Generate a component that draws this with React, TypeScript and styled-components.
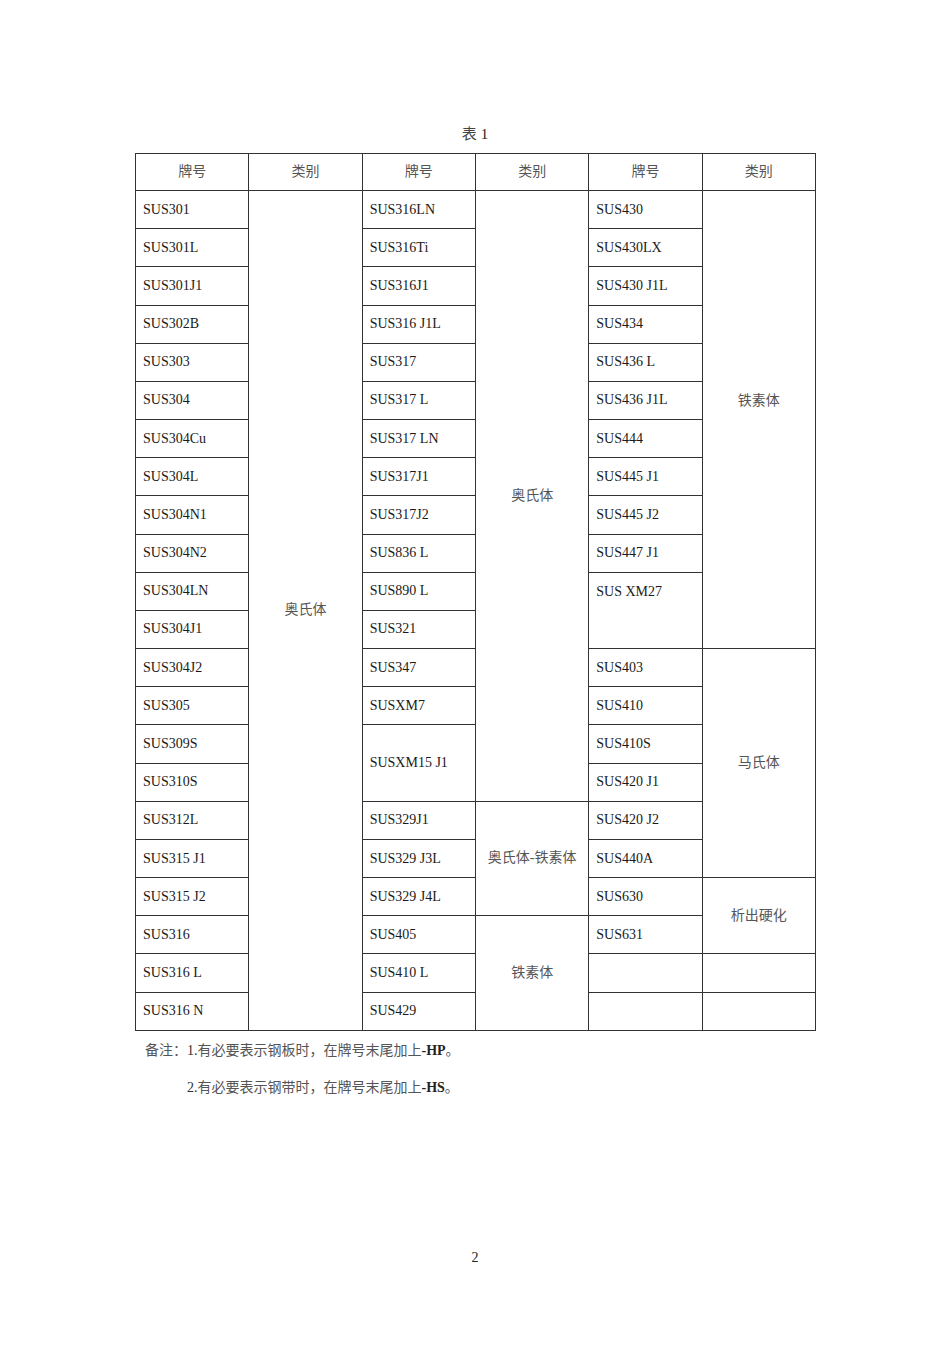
import React from "react";
import styled, { createGlobalStyle } from "styled-components";

const Global = createGlobalStyle`
  html, body { margin: 0; padding: 0; background: #fff; }
  body { font-family: "Liberation Serif", "Noto Sans CJK SC", serif; color: #1a1a1a; }
`;

const Page = styled.div`
  width: 950px;
  height: 1345px;
  box-sizing: border-box;
  padding: 124px 135px 0 135px;
  display: flex;
  flex-direction: column;
`;

const Title = styled.div`
  height: 20px;
  line-height: 20px;
  text-align: center;
  font-size: 15px;
  margin-bottom: 9px;
  font-family: "Liberation Serif", "Noto Sans CJK SC", serif;
  color: #222;
`;

const TitleCjk = styled.span`
  font-family: "Noto Sans CJK SC", serif;
  color: #444;
  line-height: 16px;
`;

const Table = styled.table`
  width: 680px;
  border-collapse: collapse;
  table-layout: fixed;
  border: 1px solid #333;
`;

const HeadRow = styled.tr`
  height: 37px;
`;

const Row = styled.tr`
  height: 38.18px;
`;

const Th = styled.th`
  border: 1px solid #333;
  font-weight: normal;
  font-size: 14px;
  font-family: "Noto Sans CJK SC", serif;
  color: #555;
  text-align: center;
  vertical-align: middle;
  padding: 0 0 4px;
  line-height: 16px;
  width: 113.33px;
`;

const Td = styled.td<{ $cat?: boolean; $top?: boolean; $lift?: boolean }>`
  border: 1px solid #333;
  padding: ${(p) => (p.$top ? "0 7px" : p.$lift ? "0 7px 42px" : p.$cat ? "0 7px 4px" : "0 7px")};
  font-size: 14px;
  font-family: ${(p) => (p.$cat ? `"Noto Sans CJK SC", serif` : `"Liberation Serif", serif`)};
  color: ${(p) => (p.$cat ? "#555" : "#1a1a1a")};
  text-align: ${(p) => (p.$cat ? "center" : "left")};
  vertical-align: ${(p) => (p.$top ? "top" : "middle")};
  line-height: ${(p) => (p.$top ? "37px" : p.$cat ? "16px" : "18px")};
  white-space: nowrap;
`;

const Hyphen = styled.span`
  font-family: "Liberation Serif", serif;
`;

const Notes = styled.div`
  margin-top: 10px;
  padding-left: 10px;
  font-size: 14px;
  font-family: "Liberation Serif", "Noto Sans CJK SC", serif;
  color: #333;
  display: flex;
  flex-direction: column;
  gap: 17px;
`;

const NoteLine = styled.div<{ $indent?: boolean }>`
  height: 20px;
  line-height: 20px;
  padding-left: ${(p) => (p.$indent ? "42px" : "0")};
  white-space: nowrap;
  overflow: visible;
`;

const Cjk = styled.span`
  font-family: "Noto Sans CJK SC", serif;
  color: #555;
  line-height: 16px;
`;

const Code = styled.span`
  font-weight: bold;
  color: #222;
`;

const PageNum = styled.div`
  margin-top: auto;
  margin-bottom: 77px;
  text-align: center;
  font-size: 14px;
  line-height: 20px;
  color: #222;
`;

type Cell = { t: string; rs?: number; cat?: boolean; top?: boolean; lift?: boolean } | null;

const N = 22;

const col1: Cell[] = [
  "SUS301", "SUS301L", "SUS301J1", "SUS302B", "SUS303", "SUS304", "SUS304Cu", "SUS304L",
  "SUS304N1", "SUS304N2", "SUS304LN", "SUS304J1", "SUS304J2", "SUS305", "SUS309S", "SUS310S",
  "SUS312L", "SUS315 J1", "SUS315 J2", "SUS316", "SUS316 L", "SUS316 N",
].map((t) => ({ t }));

const col2: Cell[] = Array.from({ length: N }, (_, i) =>
  i === 0 ? { t: "奥氏体", rs: 22, cat: true } : null
);

const col3: Cell[] = [
  { t: "SUS316LN" }, { t: "SUS316Ti" }, { t: "SUS316J1" }, { t: "SUS316 J1L" }, { t: "SUS317" },
  { t: "SUS317 L" }, { t: "SUS317 LN" }, { t: "SUS317J1" }, { t: "SUS317J2" }, { t: "SUS836 L" },
  { t: "SUS890 L" }, { t: "SUS321" }, { t: "SUS347" }, { t: "SUSXM7" }, { t: "SUSXM15 J1", rs: 2 },
  null, { t: "SUS329J1" }, { t: "SUS329 J3L" }, { t: "SUS329 J4L" }, { t: "SUS405" },
  { t: "SUS410 L" }, { t: "SUS429" },
];

const col4: Cell[] = Array.from({ length: N }, (_, i) => {
  if (i === 0) return { t: "奥氏体", rs: 16, cat: true };
  if (i === 16) return { t: "奥氏体-铁素体", rs: 3, cat: true };
  if (i === 19) return { t: "铁素体", rs: 3, cat: true };
  return null;
});

const col5: Cell[] = [
  { t: "SUS430" }, { t: "SUS430LX" }, { t: "SUS430 J1L" }, { t: "SUS434" }, { t: "SUS436 L" },
  { t: "SUS436 J1L" }, { t: "SUS444" }, { t: "SUS445 J1" }, { t: "SUS445 J2" }, { t: "SUS447 J1" },
  { t: "SUS XM27", rs: 2, top: true }, null, { t: "SUS403" }, { t: "SUS410" }, { t: "SUS410S" },
  { t: "SUS420 J1" }, { t: "SUS420 J2" }, { t: "SUS440A" }, { t: "SUS630" }, { t: "SUS631" },
  { t: "" }, { t: "" },
];

const col6: Cell[] = Array.from({ length: N }, (_, i) => {
  if (i === 0) return { t: "铁素体", rs: 12, cat: true, lift: true };
  if (i === 12) return { t: "马氏体", rs: 6, cat: true };
  if (i === 18) return { t: "析出硬化", rs: 2, cat: true };
  if (i === 20 || i === 21) return { t: "", cat: true };
  return null;
});

const columns = [col1, col2, col3, col4, col5, col6];

const renderText = (t: string) => {
  if (t === "奥氏体-铁素体") {
    return (
      <>
        奥氏体<Hyphen>-</Hyphen>铁素体
      </>
    );
  }
  return t;
};

export default function App() {
  return (
    <>
      <Global />
      <Page>
        <Title>
          <TitleCjk>表</TitleCjk> 1
        </Title>
        <Table>
          <colgroup>
            {columns.map((_, i) => (
              <col key={i} style={{ width: "113.33px" }} />
            ))}
          </colgroup>
          <thead>
            <HeadRow>
              <Th>牌号</Th>
              <Th>类别</Th>
              <Th>牌号</Th>
              <Th>类别</Th>
              <Th>牌号</Th>
              <Th>类别</Th>
            </HeadRow>
          </thead>
          <tbody>
            {Array.from({ length: N }, (_, r) => (
              <Row key={r}>
                {columns.map((col, c) => {
                  const cell = col[r];
                  if (!cell) return null;
                  return (
                    <Td
                      key={c}
                      rowSpan={cell.rs}
                      $cat={cell.cat}
                      $top={cell.top}
                      $lift={cell.lift}
                    >
                      {renderText(cell.t)}
                    </Td>
                  );
                })}
              </Row>
            ))}
          </tbody>
        </Table>
        <Notes>
          <NoteLine>
            <Cjk>备注：</Cjk>1.<Cjk>有必要表示钢板时，在牌号末尾加上</Cjk><Code>-HP</Code><Cjk>。</Cjk>
          </NoteLine>
          <NoteLine $indent>
            2.<Cjk>有必要表示钢带时，在牌号末尾加上</Cjk><Code>-HS</Code><Cjk>。</Cjk>
          </NoteLine>
        </Notes>
        <PageNum>2</PageNum>
      </Page>
    </>
  );
}
